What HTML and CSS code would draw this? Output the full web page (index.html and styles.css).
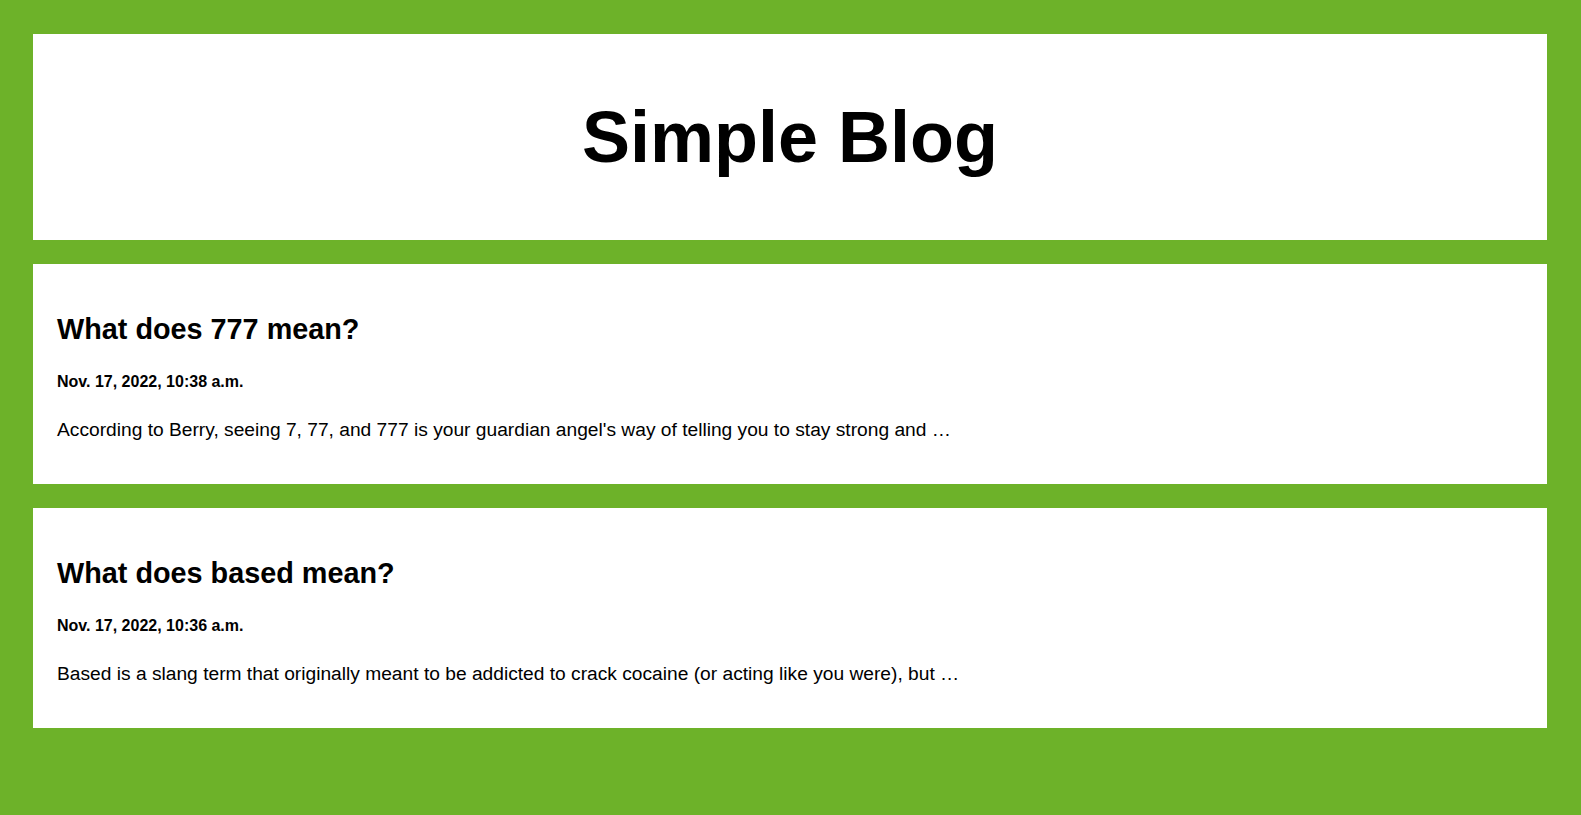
FILE: index.html
```html
<!DOCTYPE html>
<html lang="en">
<head>
<meta charset="utf-8">
<title>Simple Blog</title>
<link rel="stylesheet" href="styles.css">
</head>
<body>
<div class="page">
  <header class="site-header">
    <h1 class="site-title">Simple Blog</h1>
  </header>
  <main class="posts">
    <article class="post">
      <h2 class="post-title">What does 777 mean?</h2>
      <p class="post-date">Nov. 17, 2022, 10:38 a.m.</p>
      <p class="post-excerpt">According to Berry, seeing 7, 77, and 777 is your guardian angel's way of telling you to stay strong and …</p>
    </article>
    <article class="post">
      <h2 class="post-title">What does based mean?</h2>
      <p class="post-date">Nov. 17, 2022, 10:36 a.m.</p>
      <p class="post-excerpt">Based is a slang term that originally meant to be addicted to crack cocaine (or acting like you were), but …</p>
    </article>
  </main>
</div>
</body>
</html>
```

FILE: styles.css
```css
html, body {
  margin: 0;
  padding: 0;
}

body {
  background: #6db229;
  font-family: "Liberation Sans", Arial, sans-serif;
  color: #000;
  min-height: 815px;
}

.page {
  padding: 34px 34px 0 33px;
  display: flex;
  flex-direction: column;
  gap: 24px;
}

.site-header {
  background: #fff;
  padding: 61px 24px;
  text-align: center;
}

.site-title {
  margin: 0;
  font-size: 72px;
  line-height: 84px;
  font-weight: 700;
}

.posts {
  display: flex;
  flex-direction: column;
  gap: 24px;
}

.post {
  background: #fff;
  padding: 24px;
}

.post-title {
  margin: 25px 0 0;
  font-size: 28.8px;
  font-weight: 700;
  line-height: normal;
}

.post-date {
  margin: 27px 0 0;
  font-size: 16px;
  font-weight: 700;
  line-height: normal;
}

.post-excerpt {
  margin: 28px 0 19px;
  font-size: 19.2px;
  line-height: normal;
}
```
